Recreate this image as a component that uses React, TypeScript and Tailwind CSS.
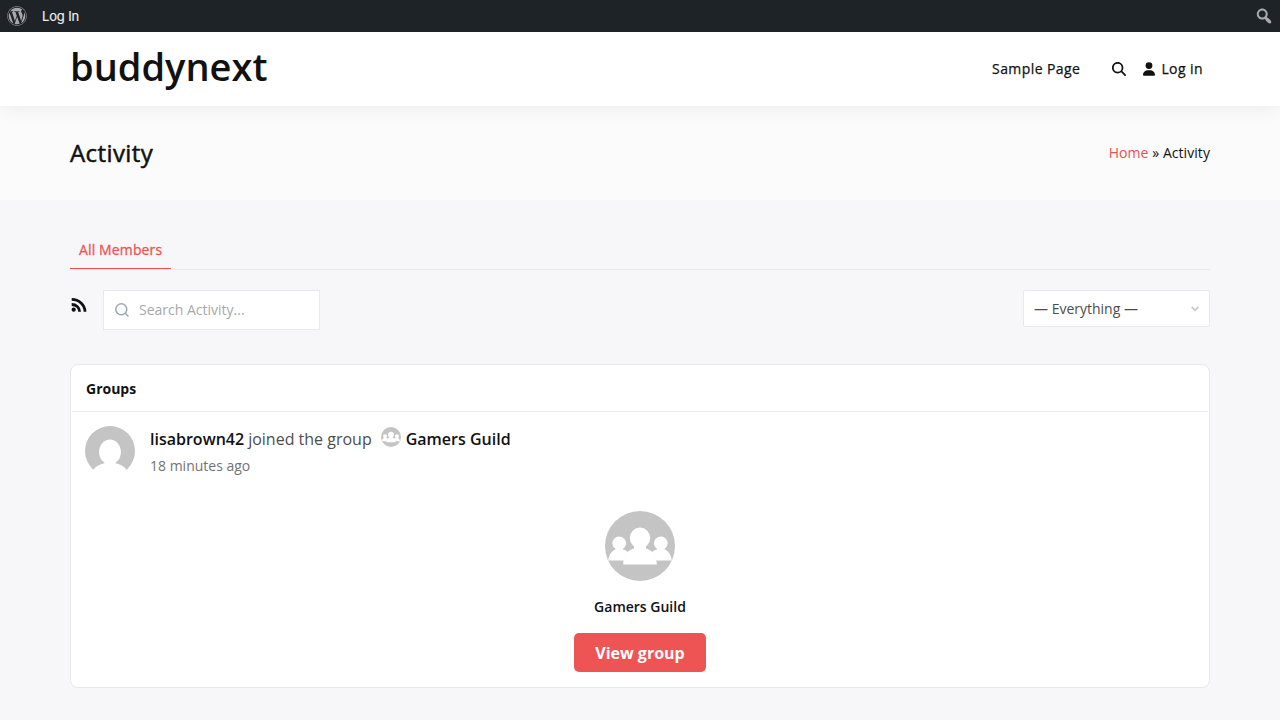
import React from "react";
import { FaWordpress } from "react-icons/fa";
import { FaMagnifyingGlass, FaUser } from "react-icons/fa6";

function AdminSearchIcon() {
  return (
    <svg viewBox="0 0 20 20" className="h-5 w-5 fill-[#a7aaad]">
      <path d="M12.14 4.18c1.87 1.87 2.11 4.75.72 6.89.12.1.22.21.36.31.2.16.47.36.81.59.34.24.56.39.66.47.42.31.73.57.94.78.32.32.6.65.84 1 .25.35.44.69.59 1.04.14.35.21.68.18 1-.02.32-.14.59-.36.81s-.49.34-.81.36c-.31.02-.65-.04-.99-.19-.35-.14-.7-.34-1.04-.59-.35-.24-.68-.52-1-.84-.21-.21-.47-.52-.77-.93-.1-.13-.25-.35-.47-.66-.22-.32-.4-.57-.56-.78-.16-.2-.29-.35-.44-.5-2.07 1.09-4.69.76-6.44-.98-2.14-2.15-2.14-5.64 0-7.78 2.15-2.15 5.63-2.15 7.78 0zm-1.41 6.36c1.36-1.37 1.36-3.58 0-4.95-1.37-1.37-3.59-1.37-4.95 0-1.37 1.37-1.37 3.58 0 4.95 1.36 1.37 3.58 1.37 4.95 0z" />
    </svg>
  );
}

function RssIcon() {
  return (
    <svg viewBox="0 0 17 16" className="mt-[7px] h-4 w-[17px] fill-none stroke-[#111111] stroke-[2.8]">
      <circle cx="3.700" cy="12.700" r="2.100" className="fill-[#111111] stroke-none" />
      <path d="M1.700 7.500C6 7.500 9.600 10.500 9.600 14.800" />
      <path d="M1.700 2.400C8.900 2.400 15 7.800 15 14.800" />
    </svg>
  );
}

function MemberAvatar() {
  return (
    <svg viewBox="0 0 50 50" className="h-[50px] w-[50px] shrink-0">
      <circle cx="25" cy="25" r="25" fill="#c4c4c4" />
      <ellipse cx="25" cy="26" rx="10.9" ry="12.5" fill="#fff" />
      <path d="M19.5 34v3.2C14.500 38 10.500 40.500 8.300 44L8 51H42L41.700 44C39.500 40.500 35.500 38 30.500 37.200V34Z" fill="#fff" />
    </svg>
  );
}

function GroupAvatar({ className }: { className: string }) {
  return (
    <svg viewBox="0 0 70 70" className={className}>
      <circle cx="35" cy="35" r="35" fill="#c4c4c4" />
      <g fill="#fff">
        <circle cx="14.200" cy="32.300" r="6.800" />
        <circle cx="55.800" cy="32.300" r="6.800" />
        <path d="M10.500 37h7.500v1.500c2.500.6 4.300 1.800 5.700 3.200C20.500 44 19 46.500 18.600 49.500H3.200C4.200 43.500 6.500 39.800 10.500 38.500Z" />
        <path d="M59.500 37h-7.500v1.500c-2.500.6-4.300 1.800-5.700 3.200 3.200 2.300 4.700 4.800 5.100 7.800H66.800C65.800 43.500 63.500 39.800 59.500 38.500Z" />
        <ellipse cx="35" cy="27" rx="10.200" ry="10.400" />
        <path d="M29 35h12v2.500C47.500 39.200 51.800 44.500 51.800 53.500H18.200C18.200 44.500 22.500 39.200 29 37.500Z" />
      </g>
    </svg>
  );
}

function AdminBar() {
  return (
    <div className="relative z-20 flex h-8 items-center justify-between bg-[#1d2327] pr-1.5 pl-[7px]">
      <div className="flex items-center">
        <FaWordpress className="h-5 w-5 text-[#a7aaad]" />
        <span className="ml-[15px] font-[Inter,sans-serif] text-[13px] leading-8 tracking-[-0.15px] text-[#f0f0f1] [-webkit-text-stroke:0.15px]">Log In</span>
      </div>
      <AdminSearchIcon />
    </div>
  );
}

function SiteHeader() {
  return (
    <header className="relative z-10 flex h-[74px] items-center justify-between bg-white px-[70px] shadow-[0_0_20px_rgba(0,0,0,0.08)]">
      <h1 className="pb-1.5 text-[38px] leading-[68px] font-semibold">buddynext</h1>
      <nav className="mr-[7px] flex items-center text-sm tracking-[0.42px] [-webkit-text-stroke:0.25px]">
        <a>Sample Page</a>
        <FaMagnifyingGlass className="ml-8 h-3.5 w-3.5" />
        <FaUser className="ml-[17px] h-3.5 w-3" />
        <a className="ml-1.5">Log in</a>
      </nav>
    </header>
  );
}

export default function App() {
  return (
    <div className="h-[720px] overflow-hidden bg-[#f7f7f9] font-['Open_Sans',sans-serif] text-[#111111]">
      <AdminBar />
      <SiteHeader />
      <div className="flex h-[94px] items-center justify-between bg-[#fbfbfb] px-[70px]">
        <h2 className="text-2xl tracking-[0.4px] [-webkit-text-stroke:0.5px]">Activity</h2>
        <div className="text-sm tracking-[0.06px]">
          <span className="text-[#ee4f54]">Home</span> » Activity
        </div>
      </div>

      <main className="px-[70px] pt-[30px]">
        <div className="flex h-10 border-b border-[#e7e9ec]">
          <a className="h-[39px] border-b border-[#ef5455] px-[9px] text-sm leading-10 tracking-[0.13px] text-[#ef5455] [-webkit-text-stroke:0.3px]">All Members</a>
        </div>

        <div className="mt-5 flex items-start">
          <RssIcon />
          <div className="ml-4 flex h-10 w-[217px] items-center border border-[#e7e9ec] bg-white pl-[11px]">
            <svg viewBox="0 0 14 14" className="h-3.5 w-3.5 fill-none stroke-[#9ca8b4] stroke-[1.5]">
              <circle cx="6.300" cy="6.300" r="5.500" />
              <path d="M10.300 10.300 13.500 13.500" />
            </svg>
            <span className="ml-2.5 text-sm text-[#a8a8a8]">Search Activity...</span>
          </div>
          <div className="ml-auto flex h-[37px] w-[187px] items-center justify-between rounded-[2px] border border-[#e7e9ec] bg-white pr-[10px] pl-2.5 text-sm text-[#4d4d4d]">
            <span>— Everything —</span>
            <svg viewBox="0 0 8 6" className="h-1.5 w-2 fill-none stroke-[#c5cbd1] stroke-[1.8]">
              <path d="M.7 1 4 4.300 7.300 1" />
            </svg>
          </div>
        </div>

        <section className="mt-[34px] h-[324px] rounded-lg border border-[#e7e7e9] bg-white">
          <h3 className="mx-px h-[47px] border-b border-[#e7e9ec] pl-3.5 text-sm leading-[48px] font-bold">Groups</h3>
          <div className="flex pt-3.5 pl-3.5">
            <MemberAvatar />
            <div className="ml-[15px]">
              <div className="flex h-[26px] items-center text-base text-[#4d4d4d]">
                <span className="font-semibold text-[#111111]">lisabrown42</span>
                <span className="ml-1">joined the group</span>
                <GroupAvatar className="mb-1 ml-[9px] h-5 w-5" />
                <span className="ml-[5px] font-semibold text-[#111111]">Gamers Guild</span>
              </div>
              <div className="mt-1 text-sm text-[#737373]">18 minutes ago</div>
            </div>
          </div>
          <div className="mt-[35px] flex flex-col items-center">
            <GroupAvatar className="h-[70px] w-[70px]" />
            <div className="mt-4 text-sm font-semibold">Gamers Guild</div>
            <button className="mt-4 h-[39px] w-[132px] rounded-[5px] bg-[#ef5455] text-base font-bold text-white">View group</button>
          </div>
        </section>
      </main>
    </div>
  );
}
